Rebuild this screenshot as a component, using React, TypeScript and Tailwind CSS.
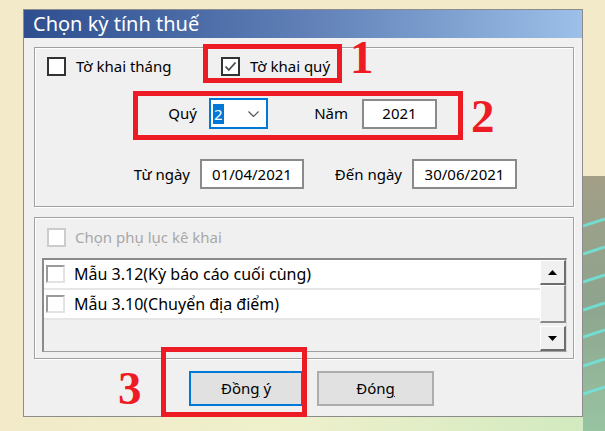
import React from 'react';

const font = { fontFamily: '"Noto Sans", "Open Sans", sans-serif' };
const serif = { fontFamily: '"Liberation Serif", "Times New Roman", serif' };

function CheckBox({ checked = false, disabled = false }: { checked?: boolean; disabled?: boolean }) {
  return (
    <div
      className={`w-[19px] h-[19px] shrink-0 bg-white border-2 flex items-center justify-center ${
        disabled ? 'border-[#cccccc]' : 'border-[#333333]'
      }`}
    >
      {checked && (
        <svg width="13" height="11" viewBox="0 0 13 11">
          <polyline points="1.5,5.5 4.8,9 11.5,1.5" fill="none" stroke="#4a4a4a" strokeWidth="1.8" />
        </svg>
      )}
    </div>
  );
}

function ListCheck() {
  return (
    <div className="w-[19px] h-[18px] shrink-0 bg-white border-2 border-t-[#9a9a9a] border-l-[#9a9a9a] border-r-[#e3e3e3] border-b-[#e3e3e3]" />
  );
}

function ScrollButton({ up }: { up: boolean }) {
  return (
    <div className="h-[25px] bg-[#f0f0f0] border-t border-l border-t-white border-l-white border-r-2 border-b-2 border-r-[#6d6d6d] border-b-[#6d6d6d] flex items-center justify-center">
      <svg width="9" height="5" viewBox="0 0 9 5">
        <polygon points={up ? '0,5 9,5 4.5,0' : '0,0 9,0 4.5,5'} fill="#000" />
      </svg>
    </div>
  );
}

function TextBox({ w, value }: { w: string; value: string }) {
  return (
    <div className={`${w} h-[30px] bg-white border-2 border-[#8a8a8a] flex items-center justify-center text-[15px] text-black`}>
      {value}
    </div>
  );
}

export default function App() {
  return (
    <div className="relative w-[605px] h-[431px] overflow-hidden bg-[#f2eac9] flex" style={font}>
      <div className="w-[583px] flex flex-col">
        <div className="pl-[23px] pt-[9px]">
          {/* dialog */}
          <div className="w-[560px] h-[408px] border border-[#8c8c8c] flex flex-col">
            <div className="h-[28px] bg-gradient-to-r from-[#2e4e8f] via-[#5f7fb6] to-[#9cc0e8] flex items-center pl-[9px]">
              <span className="text-white text-[20px] leading-none">Chọn kỳ tính thuế</span>
            </div>

            <div className="flex-1 bg-[#f0f0f0] pl-[10px] pr-[8px] pt-[9px] pb-[10px] flex flex-col text-black text-[15px]">
              {/* group 1 */}
              <div className="h-[160px] border border-[#a0a0a0] shadow-[inset_1px_1px_0_#ffffff,1px_1px_0_#ffffff] pl-[12px] pt-[9px] flex flex-col">
                <div className="flex items-center h-[19px]">
                  <div className="w-[174px] flex items-center">
                    <CheckBox />
                    <span className="ml-[10px]">Tờ khai tháng</span>
                  </div>
                  <div className="flex items-center">
                    <CheckBox checked />
                    <span className="ml-[10px]">Tờ khai quý</span>
                  </div>
                </div>

                <div className="flex items-center mt-[22px] h-[31px]">
                  <div className="w-[162px] text-right pr-[12px]">Quý</div>
                  <div className="w-[59px] h-[31px] bg-white border-2 border-[#0078d7] flex items-center pl-[2px] pr-[7px]">
                    <span className="bg-[#0078d7] text-white px-[1px] leading-[20px]">2</span>
                    <div className="flex-1" />
                    <svg width="11" height="6" viewBox="0 0 11 6">
                      <polyline points="0.5,0.5 5.5,5.5 10.5,0.5" fill="none" stroke="#555" strokeWidth="1.2" />
                    </svg>
                  </div>
                  <div className="w-[94px] text-right pr-[14px]">Năm</div>
                  <TextBox w="w-[75px]" value="2021" />
                </div>

                <div className="flex items-center mt-[30px] h-[30px]">
                  <div className="w-[153px] text-right pr-[10px]">Từ ngày</div>
                  <TextBox w="w-[104px]" value="01/04/2021" />
                  <div className="w-[108px] text-right pr-[10px]">Đến ngày</div>
                  <TextBox w="w-[105px]" value="30/06/2021" />
                </div>
              </div>

              {/* group 2 */}
              <div className="mt-[10px] h-[142px] border border-[#a0a0a0] shadow-[inset_1px_1px_0_#ffffff,1px_1px_0_#ffffff] pl-[7px] pr-[6px] pt-[10px] flex flex-col">
                <div className="flex items-center h-[19px] ml-[5px]">
                  <CheckBox disabled />
                  <span className="ml-[9px] text-[#a8a8a8]">Chọn phụ lục kê khai</span>
                </div>
                <div className="mt-[11px] h-[94px] border-t-2 border-l-2 border-r border-b border-t-[#8a8a8a] border-l-[#8a8a8a] border-r-[#dcdcdc] border-b-[#a0a0a0] bg-white flex">
                  <div className="flex-1 flex flex-col text-[16px]">
                    <div className="h-[30px] border-b-2 border-[#e6e6e6] flex items-center pl-[2px]">
                      <ListCheck />
                      <span className="ml-[9px]">Mẫu 3.12(Kỳ báo cáo cuối cùng)</span>
                    </div>
                    <div className="h-[30px] border-b-2 border-[#e6e6e6] flex items-center pl-[2px]">
                      <ListCheck />
                      <span className="ml-[9px]">Mẫu 3.10(Chuyển địa điểm)</span>
                    </div>
                    <div className="flex-1 bg-[#f0f0f0]" />
                  </div>
                  <div className="w-[26px] flex flex-col bg-[#f0f0f0]">
                    <ScrollButton up />
                    <div className="flex-1 bg-[#f0f0f0] border-t border-l border-t-white border-l-white border-r-2 border-b-2 border-r-[#8a8a8a] border-b-[#8a8a8a] mb-[3px]" />
                    <ScrollButton up={false} />
                  </div>
                </div>
              </div>

              {/* buttons */}
              <div className="mt-[12px] h-[35px] flex pl-[155px] gap-[14px]">
                <button className="w-[114px] h-[35px] bg-[#e1e1e1] border-2 border-[#0078d7] text-[15px] text-black">
                  Đồn<span className="underline underline-offset-2">g</span> ý
                </button>
                <button className="w-[117px] h-[35px] bg-[#e1e1e1] border-2 border-[#adadad] text-[15px] text-black">
                  Đón<span className="underline underline-offset-2">g</span>
                </button>
              </div>
            </div>
          </div>
        </div>
        <div className="flex-1 bg-gradient-to-r from-[#f2eac9] via-[#eef0cc] to-[#d2eabf]" />
      </div>

      {/* desktop behind, right edge */}
      <div className="flex-1 flex flex-col">
        <div className="h-[176px]" />
        <div className="flex-1 bg-gradient-to-b from-[#a39e86] via-[#8ea48e] to-[#98c4a2]">
          <svg width="22" height="255" viewBox="0 0 22 255">
            {[50, 78, 106, 134, 161, 190, 218].map((y) => (
              <line key={y} x1="0" y1={y} x2="22" y2={y - 7} stroke="#6fe6dc" strokeWidth="3" opacity="0.85" />
            ))}
          </svg>
        </div>
      </div>

      {/* annotations */}
      <div className="absolute left-[203px] top-[44px] w-[139px] h-[39px] border-[5px] border-[#ed1c24]" />
      <div className="absolute left-[133px] top-[91px] w-[330px] h-[49px] border-[5px] border-[#ed1c24]" />
      <div className="absolute left-[161px] top-[347px] w-[146px] h-[70px] border-[5px] border-[#ed1c24]" />
      <div className="absolute left-[350px] top-[34px] text-[47px] font-bold leading-none text-[#ed1c24]" style={serif}>1</div>
      <div className="absolute left-[471px] top-[93px] text-[47px] font-bold leading-none text-[#ed1c24]" style={serif}>2</div>
      <div className="absolute left-[118px] top-[365px] text-[47px] font-bold leading-none text-[#ed1c24]" style={serif}>3</div>
    </div>
  );
}
